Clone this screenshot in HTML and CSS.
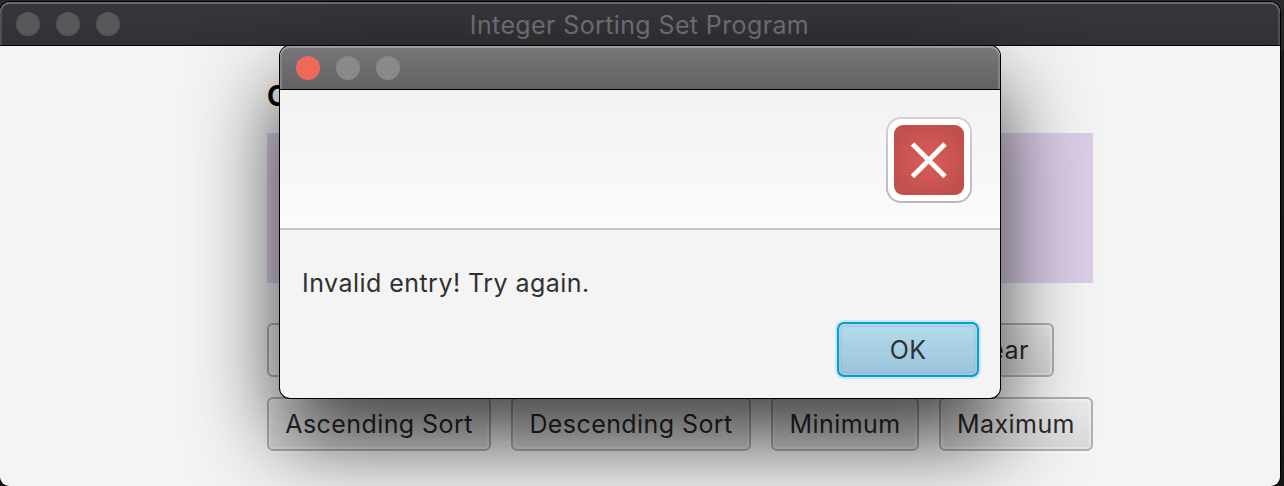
FILE: index.html
```html
<!DOCTYPE html>
<html lang="en">
<head>
<meta charset="utf-8">
<title>Integer Sorting Set Program</title>
<link rel="stylesheet" href="styles.css">
</head>
<body>
<div class="desktop">
  <main class="window">
    <header class="titlebar">
      <div class="lights"><i class="light"></i><i class="light"></i><i class="light"></i></div>
      <span class="title">Integer Sorting Set Program</span>
    </header>
    <section class="content">
      <h1 class="heading">C</h1>
      <div class="output"></div>
      <div class="row top-row">
        <button class="btn entry"></button>
        <button class="btn clear">Clear</button>
      </div>
      <div class="row">
        <button class="btn asc">Ascending Sort</button>
        <button class="btn desc">Descending Sort</button>
        <button class="btn min">Minimum</button>
        <button class="btn max">Maximum</button>
      </div>
    </section>
  </main>
  <div class="dialog" role="alertdialog">
    <header class="dialog-bar">
      <div class="lights"><i class="light close"></i><i class="light"></i><i class="light"></i></div>
    </header>
    <div class="dialog-head">
      <svg class="error-icon" width="86" height="86" viewBox="0 0 86 86">
        <defs>
          <linearGradient id="rim" x1="0" y1="0" x2="0" y2="1"><stop offset="0" stop-color="#d2d2d2"/><stop offset="1" stop-color="#b9b9b9"/></linearGradient>
          <radialGradient id="red" cx=".5" cy=".5" r=".55"><stop offset="0" stop-color="#db5c5c"/><stop offset="1" stop-color="#c1504a"/></radialGradient>
        </defs>
        <rect x="1" y="1" width="84" height="84" rx="14" fill="#fff" stroke="url(#rim)" stroke-width="2"/>
        <rect x="8" y="8" width="70" height="70" rx="9" fill="url(#red)"/>
        <path d="M26.500 27L59 59.500M59 27L26.500 59.500" stroke="#fff" stroke-width="4.800" fill="none"/>
      </svg>
    </div>
    <div class="dialog-body">
      <p class="message">Invalid entry! Try again.</p>
      <button class="ok">OK</button>
    </div>
  </div>
</div>
</body>
</html>
```
FILE: styles.css
```css
* { box-sizing: border-box; }
body { margin: 0; overflow: hidden; font-family: Inter, "Liberation Sans", sans-serif; color: #303030; }
.desktop {
  position: relative;
  width: 1284px;
  height: 486px;
  padding-top: 2px;
  overflow: hidden;
  background: linear-gradient(#2b292c, #252729 50px, #17191a 52px, #161718);
}
.window {
  width: 1280px;
  height: 484px;
  border-radius: 10px 10px 9px 9px;
  overflow: hidden;
  background: #f4f4f4;
  box-shadow: 0 0 0 1px #000;
}
.titlebar {
  position: relative;
  height: 44px;
  padding: 10px 16px;
  display: flex;
  background: linear-gradient(#38363a, #333135);
  border-bottom: 1px solid #000;
  border-radius: 10px 10px 0 0;
  box-shadow: inset 0 2px #69696b, inset 2px 0 #515053, inset -2px 0 #515053;
}
.lights { display: flex; gap: 16px; }
.light { width: 24px; height: 24px; border-radius: 50%; background: #58585a; }
.title {
  flex: 1;
  margin-right: 105px;
  text-align: center;
  font-size: 25px;
  letter-spacing: .38px;
  line-height: 26px;
  color: #737176;
}
.content { padding: 32px 187px 0 267px; }
.heading { margin: 0; height: 55px; font-size: 28px; line-height: 36px; font-weight: 700; color: #000; }
.output { height: 150px; background: #dbcde7; }
.row { display: flex; gap: 20px; }
.top-row { margin: 40px 0 20px; }
.btn {
  height: 54px;
  padding: 0;
  border: 2px solid #b0b0b0;
  border-radius: 6px;
  background: linear-gradient(#ececec, #d9d9d9);
  box-shadow: inset 0 0 0 2px rgba(255,255,255,.3), 0 2px rgba(255,255,255,.4);
  font: 25px/40px Inter, "Liberation Sans", sans-serif;
  letter-spacing: .42px;
  color: #2b2b2b;
  white-space: nowrap;
}
.entry { width: 660px; background: #f3f3f3; }
.clear { width: 107px; padding-right: 8px; }
.asc { width: 224px; }
.desc { width: 240px; }
.min { width: 148px; }
.max { width: 154px; }
.dialog {
  position: absolute;
  left: 280px;
  top: 46px;
  width: 720px;
  height: 352px;
  border-radius: 10px;
  background: #f4f4f4;
  box-shadow: 0 0 0 1px #000, 0 40px 88px rgba(0,0,0,.76);
}
.dialog-bar {
  height: 44px;
  padding: 10px 16px;
  background: linear-gradient(#79777a, #626163);
  border-bottom: 1px solid #000;
  border-radius: 10px 10px 0 0;
  box-shadow: inset 0 2px #9b9c9d, inset 2px 0 #858586, inset -2px 0 #858586;
}
.dialog .light { background: #89888a; }
.dialog .close { background: #ee685c; }
.dialog-head {
  height: 140px;
  padding: 27px 28px 0;
  display: flex;
  justify-content: flex-end;
  background: linear-gradient(#f2f2f2, #fbfbfb);
  border-bottom: 2px solid #c6c6c6;
}
.dialog-body { display: flex; flex-direction: column; align-items: flex-end; padding: 35px 21px 0 22px; }
.message { margin: 0 0 21px; align-self: flex-start; font-size: 25px; letter-spacing: .46px; line-height: 36px; }
.ok {
  width: 142px;
  height: 55px;
  padding: 0;
  border: 2px solid #039ed3;
  border-radius: 7px;
  background: linear-gradient(#b2dbed, #9bc4da);
  box-shadow: 0 0 0 2px #c8e7f2, inset 0 0 0 2px rgba(255,255,255,.18), inset 0 0 0 3px rgba(60,130,160,.15);
  font: 25px/40px Inter, "Liberation Sans", sans-serif;
  letter-spacing: .4px;
  color: #303030;
}
```
